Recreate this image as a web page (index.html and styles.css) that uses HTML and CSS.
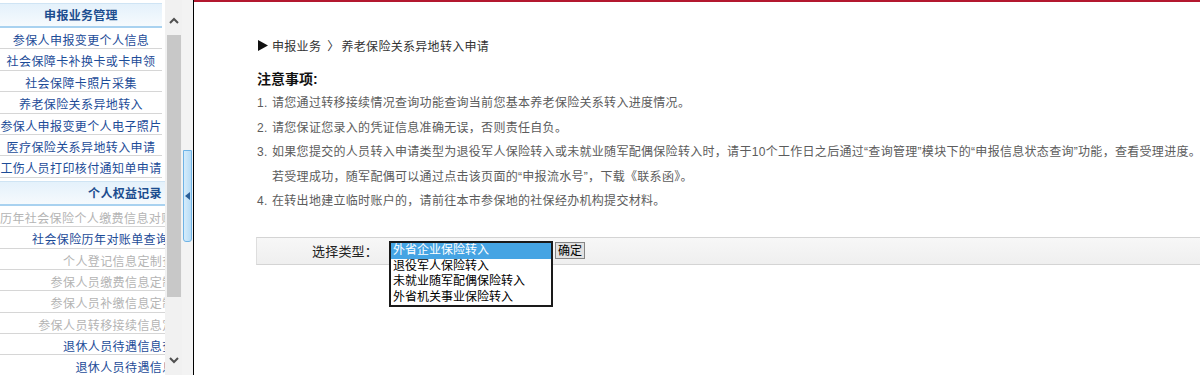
FILE: index.html
```html
<!DOCTYPE html>
<html lang="zh-CN">
<head>
    <meta charset="UTF-8">
    <title>养老保险关系异地转入申请</title>
    <link rel="stylesheet" href="styles.css">
</head>
<body>
    <aside class="sidebar">
        <nav class="menu">
            <div class="menu-group">
                <div class="menu-title">申报业务管理</div>
                <a class="menu-item">参保人申报变更个人信息</a>
                <a class="menu-item">社会保障卡补换卡或卡申领</a>
                <a class="menu-item">社会保障卡照片采集</a>
                <a class="menu-item">养老保险关系异地转入</a>
                <a class="menu-item">参保人申报变更个人电子照片</a>
                <a class="menu-item">医疗保险关系异地转入申请</a>
                <a class="menu-item">工伤人员打印核付通知单申请</a>
            </div>
            <div class="menu-group wide">
                <div class="menu-title">个人权益记录</div>
                <a class="menu-item off">历年社会保险个人缴费信息对账单查询打印下载</a>
                <a class="menu-item">社会保险历年对账单查询打印下载</a>
                <a class="menu-item off">个人登记信息定制查询</a>
                <a class="menu-item off">参保人员缴费信息定制查询</a>
                <a class="menu-item off">参保人员补缴信息定制查询</a>
                <a class="menu-item off">参保人员转移接续信息定制查询</a>
                <a class="menu-item">退休人员待遇信息查询</a>
                <a class="menu-item">退休人员待遇信息</a>
            </div>
        </nav>
        <!-- fake scrollbar of the menu frame -->
        <div class="scrollbar">
            <span class="scroll-btn">
                <svg width="10" height="7" viewBox="0 0 10 7"><polyline points="1,6 5,2 9,6" fill="none" stroke="#505050" stroke-width="2"/></svg>
            </span>
            <span class="thumb"></span>
            <span class="scroll-btn">
                <svg width="10" height="7" viewBox="0 0 10 7"><polyline points="1,1 5,5 9,1" fill="none" stroke="#505050" stroke-width="2"/></svg>
            </span>
        </div>
        <div class="fold">
            <span class="fold-tab">
                <svg width="5" height="8" viewBox="0 0 5 8"><polygon points="5,0 0,4 5,8" fill="#2b5f98"/></svg>
            </span>
        </div>
    </aside>

    <main class="content">
        <div class="crumb">
            <svg class="crumb-arrow" width="10" height="11" viewBox="0 0 10 11"><polygon points="0,0 10,5.5 0,11" fill="#111"/></svg>
            <span>申报业务</span>
            <span class="crumb-sep">〉</span>
            <span>养老保险关系异地转入申请</span>
        </div>

        <h3 class="notice-title">注意事项:</h3>
        <ol class="notice">
            <li><span class="num">1.</span><span>请您通过转移接续情况查询功能查询当前您基本养老保险关系转入进度情况。</span></li>
            <li><span class="num">2.</span><span>请您保证您录入的凭证信息准确无误，否则责任自负。</span></li>
            <li><span class="num">3.</span><span>如果您提交的人员转入申请类型为退役军人保险转入或未就业随军配偶保险转入时，请于10个工作日之后通过“查询管理”模块下的“申报信息状态查询”功能，查看受理进度。<br>若受理成功，随军配偶可以通过点击该页面的“申报流水号”，下载《联系函》。</span></li>
            <li><span class="num">4.</span><span>在转出地建立临时账户的，请前往本市参保地的社保经办机构提交材料。</span></li>
        </ol>

        <div class="form-row">
            <label class="form-label">选择类型：</label>
            <div class="picker">
                <ul class="picker-list">
                    <li class="active">外省企业保险转入</li>
                    <li>退役军人保险转入</li>
                    <li>未就业随军配偶保险转入</li>
                    <li>外省机关事业保险转入</li>
                </ul>
            </div>
            <button class="btn">确定</button>
        </div>
    </main>
</body>
</html>
```

FILE: styles.css
```css
html, body {
    margin: 0;
    height: 100%;
}
body {
    display: flex;
    overflow: hidden;
    background-color: #fff;
    font-family: "Liberation Sans", "Noto Sans CJK SC", sans-serif;
    font-size: 12px;
    color: #333;
}

/* left menu frame */
.sidebar {
    display: flex;
    width: 193px;
    flex-shrink: 0;
    border-right: 1px solid #000;
}
.menu {
    width: 165px;
    overflow: hidden;
    background-color: #fff;
}
.menu-group {
    width: 162px;
    margin-top: 3px;
}
.menu-group.wide {
    width: 250px;
}
.menu-title {
    height: 25px;
    box-sizing: border-box;
    padding-top: 1px;
    line-height: 23px;
    text-align: center;
    font-weight: bold;
    font-size: 12px;
    letter-spacing: 0.3px;
    color: #1c4d8f;
    background: linear-gradient(#e4f1fb, #f6fafd);
    border-top: 1px solid #cfe4f4;
    border-bottom: 2px solid #a9d2f0;
}
.menu-item {
    display: block;
    height: 21.4px;
    box-sizing: border-box;
    padding-top: 3px;
    line-height: 20px;
    text-align: center;
    white-space: nowrap;
    letter-spacing: 0.4px;
    color: #1d4c98;
    border-bottom: 1px solid #d6d6d6;
    cursor: pointer;
}
.menu-item.off {
    color: #b4b4b4;
}

.scrollbar {
    display: flex;
    flex-direction: column;
    align-items: center;
    width: 17px;
    padding: 12px 0 6px;
    box-sizing: border-box;
    background-color: #f1f1f1;
}
.scroll-btn {
    display: flex;
    align-items: center;
    justify-content: center;
    height: 17px;
}
.thumb {
    width: 14px;
    height: 262px;
    margin-top: 6px;
    margin-bottom: auto;
    background-color: #c8c8c8;
}
.fold {
    display: flex;
    align-items: flex-start;
    width: 11px;
    background-color: #f3f3f3;
}
.fold-tab {
    display: flex;
    align-items: center;
    justify-content: center;
    width: 9px;
    height: 92px;
    margin: 150px 0 0 1px;
    box-sizing: border-box;
    background: linear-gradient(to right, #d5ecfb, #b7dcf6);
    border: 1px solid #6eb3e6;
    border-radius: 0 0 3px 3px;
}

/* main area */
.content {
    flex: 1;
    min-width: 0;
    overflow: hidden;
    border-top: 2px solid #b3182f;
    padding: 35px 0 0 63px;
    letter-spacing: 0.3px;
}
.crumb {
    display: flex;
    align-items: center;
    height: 16px;
    color: #333;
}
.crumb-arrow {
    margin: 0 4px 0 1px;
}
.crumb-sep {
    margin: 0 2px 0 6px;
}
.notice-title {
    margin: 16px 0 0;
    line-height: 20px;
    font-size: 14px;
    font-weight: bold;
    letter-spacing: 0;
    color: #111;
}
.notice {
    margin: 2px 0 0;
    padding: 0;
    list-style: none;
    color: #5c5c5c;
}
.notice li {
    display: flex;
    line-height: 24.5px;
    white-space: nowrap;
}
.num {
    width: 15px;
    flex-shrink: 0;
}

.form-row {
    display: flex;
    align-items: center;
    width: 1000px;
    height: 28px;
    box-sizing: border-box;
    margin: 23px 0 0 -1px;
    padding-left: 55px;
    background: linear-gradient(#f7f7f7, #efefef);
    border-top: 1px solid #d4d4d4;
    border-bottom: 1px solid #d4d4d4;
    border-left: 1px solid #dedede;
    letter-spacing: 0;
}
.form-label {
    font-size: 13px;
    letter-spacing: 0.2px;
    color: #222;
}
.picker {
    position: relative;
    width: 164px;
    height: 17px;
    margin-left: 11px;
}
.picker-list {
    position: absolute;
    top: -1px;
    left: 0;
    width: 164px;
    margin: 0;
    padding: 0;
    box-sizing: border-box;
    list-style: none;
    background-color: #fff;
    border: 2px solid #1a1a1a;
}
.picker-list li {
    height: 15.5px;
    line-height: 15.5px;
    padding-left: 2px;
    color: #000;
    white-space: nowrap;
}
.picker-list li.active {
    background-color: #45a4e3;
    color: #fff;
}
.btn {
    height: 17px;
    margin-left: 2px;
    padding: 0 2px;
    font-family: "Liberation Sans", "Noto Sans CJK SC", sans-serif;
    font-size: 12px;
    line-height: 14px;
    color: #000;
    background-color: #e1e1e1;
    border: 1px solid #858585;
    border-radius: 0;
}
```
